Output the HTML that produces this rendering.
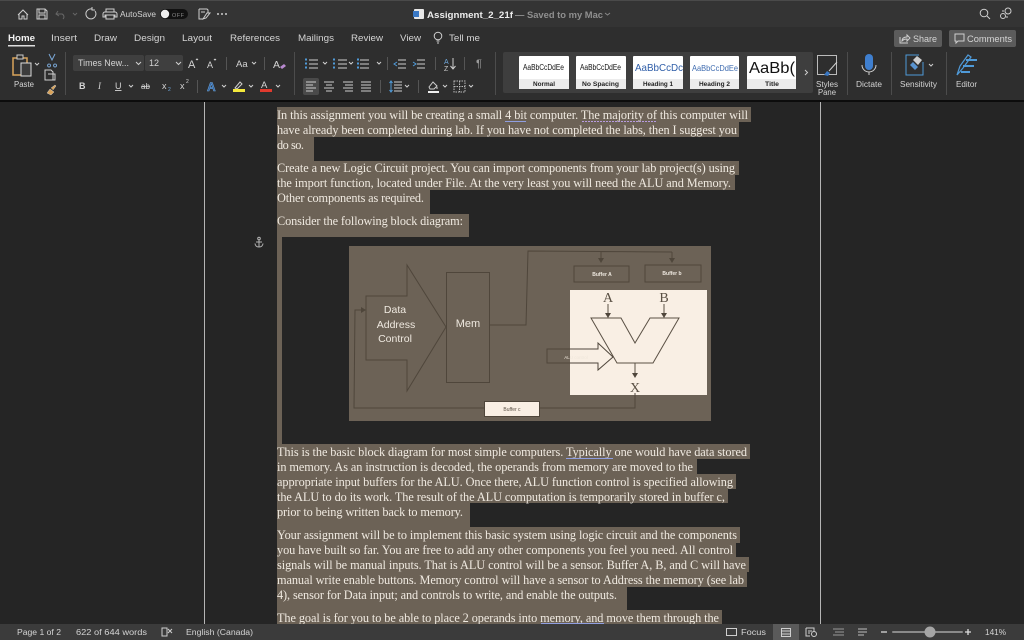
<!DOCTYPE html>
<html><head><meta charset="utf-8"><style>
html,body{margin:0;padding:0;background:#252525;width:1024px;height:640px;overflow:hidden}
svg{display:block;position:absolute;left:0;top:0;filter:blur(.3px)}
.s{font-family:"Liberation Sans",sans-serif}
.u{font-family:"Liberation Sans",sans-serif;font-size:9px;fill:#d4d4d4}
.d{font-family:"Liberation Serif",serif;font-size:12.3px;fill:#efe9e0}
.i{fill:none;stroke:#cfcfcf;stroke-width:1}
.b{fill:none;stroke:#4f9ad8;stroke-width:1}
.k{font-family:"Liberation Sans",sans-serif;fill:#111}
.l{font-family:"Liberation Sans",sans-serif;font-size:6px;fill:#222;font-weight:bold}
</style></head><body>
<svg width="1024" height="640" viewBox="0 0 1024 640" xmlns="http://www.w3.org/2000/svg">
<!-- chrome -->
<rect width="1024" height="27" fill="#343434"/>
<rect width="1024" height="1" fill="#4a4a4a"/>
<rect y="27" width="1024" height="74" fill="#2e2e2e"/>
<rect y="100" width="1024" height="2" fill="#0c0c0c"/>
<rect y="102" width="1024" height="522" fill="#252525"/>
<!-- title bar icons -->
<path class="i" d="M18 15l5-5 5 5M19 14v5h3v-3h2v3h3v-5"/>
<path class="i" d="M37 9h8l2 2v8h-10zM39 9v4h6V9M39 19v-4h6v4"/>
<path d="M58 11l-2 3 3 2M56 14h6a3 3 0 0 1 1 5" fill="none" stroke="#666" stroke-width="1"/>
<path d="M73 13l2 2 2-2" fill="none" stroke="#666" stroke-width="1"/>
<path class="i" d="M95 11a5 5 0 1 1-3-2M92 7v3h3"/>
<path class="i" d="M105 12h10a2 2 0 0 1 2 2v3h-2v-2h-10v2h-2v-3a2 2 0 0 1 2-2zM106 12V9h8v3M106 15h8v4h-8z"/>
<text class="u" x="120" y="17" textLength="36" lengthAdjust="spacingAndGlyphs" style="font-size:8.5px">AutoSave</text>
<rect x="160" y="9" width="28" height="10" rx="5" fill="#111"/>
<circle cx="165" cy="14" r="4.2" fill="#eee"/>
<text x="172" y="17" class="s" font-size="5.5" fill="#888" textLength="12">OFF</text>
<path class="i" d="M199 9h8l1 1v3M199 9v10h4M201 12h4M207 13l-4 6 3-1 4-5z"/>
<circle cx="218" cy="14" r="1" fill="#ccc"/><circle cx="222" cy="14" r="1" fill="#ccc"/><circle cx="226" cy="14" r="1" fill="#ccc"/>
<rect x="414" y="9" width="10" height="10" rx="1" fill="#e8e8e8"/><rect x="413" y="11" width="6" height="6" fill="#3a78c4"/>
<text x="427" y="18" class="s" font-size="9.5" font-weight="bold" fill="#ececec" textLength="86" lengthAdjust="spacingAndGlyphs">Assignment_2_21f</text>
<text x="515" y="18" class="s" font-size="9.5" font-weight="bold" fill="#8f8f8f" textLength="88" lengthAdjust="spacingAndGlyphs">— Saved to my Mac</text>
<path d="M605 13l2.500 2 2.500-2" fill="none" stroke="#888"/>
<circle cx="984" cy="13" r="3.800" class="i"/><path class="i" d="M987 16l3 3"/>
<circle cx="1008" cy="11" r="3" class="i"/><circle cx="1003" cy="16" r="2.500" class="i"/><path class="i" d="M1002 11h2M1007 16v2"/>
<!-- tabs -->
<text x="8" y="41" class="s" font-size="9.500" font-weight="bold" fill="#f2f2f2" textLength="27" lengthAdjust="spacingAndGlyphs">Home</text>
<rect x="8" y="45" width="27" height="1.500" fill="#ddd"/>
<g class="u" style="font-size:9.500px">
<text x="51" y="41" textLength="26" lengthAdjust="spacingAndGlyphs">Insert</text>
<text x="94" y="41" textLength="23" lengthAdjust="spacingAndGlyphs">Draw</text>
<text x="134" y="41" textLength="31" lengthAdjust="spacingAndGlyphs">Design</text>
<text x="182" y="41" textLength="30" lengthAdjust="spacingAndGlyphs">Layout</text>
<text x="230" y="41" textLength="50" lengthAdjust="spacingAndGlyphs">References</text>
<text x="298" y="41" textLength="36" lengthAdjust="spacingAndGlyphs">Mailings</text>
<text x="351" y="41" textLength="32" lengthAdjust="spacingAndGlyphs">Review</text>
<text x="400" y="41" textLength="21" lengthAdjust="spacingAndGlyphs">View</text>
<text x="449" y="41" textLength="31" lengthAdjust="spacingAndGlyphs">Tell me</text>
</g>
<circle cx="438" cy="36" r="3.800" class="i"/><path class="i" d="M436.500 41h3M437 43h2"/>
<!-- share -->
<rect x="894" y="30" width="48" height="17" rx="2" fill="#5b5b5b"/>
<path class="i" d="M900 37v6h8M902 41c0-3 2-4 5-4v-2l3 3-3 3v-2c-2 0-3 0-5 2z"/>
<text x="913" y="42" class="u" style="font-size:9.500px" textLength="24" lengthAdjust="spacingAndGlyphs">Share</text>
<rect x="949" y="30" width="67" height="17" rx="2" fill="#5b5b5b"/>
<path class="i" d="M955 34h9v7h-6l-2 2v-2h-1z"/>
<text x="967" y="42" class="u" style="font-size:9.500px" textLength="45" lengthAdjust="spacingAndGlyphs">Comments</text>
<!-- clipboard -->
<rect x="13" y="58" width="14" height="17" fill="none" stroke="#d9a35a" stroke-width="1.500"/>
<rect x="17" y="55" width="6" height="4" fill="#2e2e2e" stroke="#ccc"/>
<rect x="21" y="63" width="10" height="13" fill="#3c3c3c" stroke="#ddd"/>
<path class="i" d="M35 63l2 2 2-2"/>
<text x="14" y="87" class="u" style="font-size:8px" textLength="20" lengthAdjust="spacingAndGlyphs">Paste</text>
<path d="M49 54l3 6 3-6M49 64a1.500 1.500 0 1 0 .1 0M55 64a1.500 1.500 0 1 0 .1 0" fill="none" stroke="#7aa7d6"/>
<path class="i" d="M45 70h6l2 2v8h-8zM48 74h7v6h-7"/>
<path d="M47 93l3-4 4 3-3 3zM51 88l4-3 1 1-3 4" fill="#d9a35a" stroke="#ccc" stroke-width=".5"/>
<rect x="65" y="52" width="1" height="43" fill="#4c4c4c"/>
<!-- font -->
<rect x="73" y="55" width="71" height="16" rx="2" fill="#3f3f3f"/>
<rect x="145" y="55" width="38" height="16" rx="2" fill="#3f3f3f"/>
<text x="78" y="66" class="u" style="font-size:9px" textLength="51" lengthAdjust="spacingAndGlyphs">Times New...</text>
<path class="i" d="M136 62l2.500 2.500 2.500-2.500M176 62l2.500 2.500 2.500-2.500"/>
<text x="149" y="66" class="u">12</text>
<text x="188" y="68" class="u" style="font-size:11px">A</text><path class="i" d="M196 60l1-1 1 1" />
<text x="207" y="68" class="u" style="font-size:9px">A</text><path class="i" d="M214 59l1 1 1-1"/>
<rect x="226" y="57" width="1" height="13" fill="#555"/>
<text x="236" y="67" class="u" style="font-size:9.500px">Aa</text><path class="i" d="M252 62l2 2 2-2"/>
<rect x="264" y="57" width="1" height="13" fill="#555"/>
<text x="273" y="68" class="u" style="font-size:10.500px">A</text>
<path d="M280 67l4-3 2 2-4 3z" fill="#b98ad0"/>
<!-- formatting row -->
<g class="u" style="font-size:9px">
<text x="79" y="89" font-weight="bold">B</text>
<text x="98" y="89" font-style="italic" style="font-family:'Liberation Serif',serif">I</text>
<text x="115" y="89" text-decoration="underline">U</text>
<text x="141" y="89" text-decoration="line-through" style="font-size:8px">ab</text>
<text x="162" y="89">x</text><text x="168" y="91" style="font-size:5px;fill:#6fa8dc">2</text>
<text x="180" y="89">x</text><text x="186" y="83" style="font-size:5px">2</text>
</g>
<path class="i" d="M129 85l2 2 2-2"/>
<rect x="197" y="80" width="1" height="13" fill="#555"/>
<text x="207" y="91" class="s" font-size="12" font-weight="bold" fill="#2f5f9e" stroke="#6fa8dc" stroke-width=".5">A</text>
<path class="i" d="M222 85l2 2 2-2M249 85l2 2 2-2M276 85l2 2 2-2"/>
<path class="i" d="M235 88l5-6 2 2-5 5z"/><rect x="233" y="89" width="12" height="3" fill="#f4e93c"/>
<text x="261" y="88" class="u" style="font-size:9.500px">A</text><rect x="260" y="89" width="12" height="3" fill="#e03a2e"/>
<rect x="294" y="52" width="1" height="43" fill="#4c4c4c"/>
<!-- paragraph -->
<path class="i" d="M309 60h9M309 64h9M309 68h9M338 60h9M338 64h9M338 68h9M360 60h9M360 64h9M360 68h9"/>
<path d="M305 59.500h2M305 63.500h2M305 67.500h2M333 59.500h2M333 63.500h2M333 67.500h2M357 59.500h2M357 63.500h2M357 67.500h2" stroke="#4f9ad8" stroke-width="2"/>
<path class="i" d="M323 62l2 2 2-2M349 62l2 2 2-2M377 62l2 2 2-2"/>
<rect x="387" y="57" width="1" height="13" fill="#555"/>
<path class="i" d="M398 60h8M398 64h8M398 68h8M417 60h8M417 64h8M417 68h8"/>
<path class="b" d="M397 62l-3 2 3 2M413 62l3 2-3 2"/>
<rect x="435" y="57" width="1" height="13" fill="#555"/>
<text x="444" y="64" class="s" font-size="7" fill="#6fa8dc">A</text><text x="444" y="71" class="s" font-size="7" fill="#ccc">Z</text>
<path class="i" d="M453 58v11M450.500 66l2.500 3 2.500-3"/>
<rect x="464" y="57" width="1" height="13" fill="#555"/>
<text x="476" y="67" class="u" style="font-size:11px;fill:#999">¶</text>
<rect x="303" y="78" width="16" height="17" rx="2" fill="#4a4a4a"/>
<path class="i" d="M306 82h10M306 85h7M306 88h10M306 91h7M324 82h10M326 85h6M324 88h10M326 91h6M343 82h10M345 85h8M343 88h10M345 91h8M361 82h10M361 85h10M361 88h10M361 91h10"/>
<rect x="380" y="80" width="1" height="13" fill="#555"/>
<path class="i" d="M394 82h8M394 85h8M394 88h8M394 91h8"/><path class="b" d="M391 81v11M389.500 83l1.500-2 1.500 2M389.500 90l1.500 2 1.500-2"/>
<path class="i" d="M405 85l2 2 2-2"/>
<rect x="418" y="80" width="1" height="13" fill="#555"/>
<path class="i" d="M429 87l4-5 4 4-3 3h-4zM437 87v2"/><rect x="428" y="91" width="11" height="2" fill="#eee"/>
<path class="i" d="M443 85l2 2 2-2M469 85l2 2 2-2"/>
<rect x="454" y="81" width="11" height="11" fill="none" stroke="#bbb" stroke-dasharray="1.500 1"/><path d="M459.500 81v11M454 86.500h11" stroke="#bbb" stroke-dasharray="1.500 1"/>
<rect x="495" y="52" width="1" height="43" fill="#4c4c4c"/>
<!-- styles gallery -->
<rect x="503" y="52" width="310" height="41" rx="2" fill="#3e3e3e"/>
<g>
<rect x="519" y="56" width="50" height="33" rx="1" fill="#fff"/><rect x="519" y="79" width="50" height="10" fill="#ececec"/>
<rect x="576" y="56" width="50" height="33" rx="1" fill="#fff"/><rect x="576" y="79" width="50" height="10" fill="#ececec"/>
<rect x="633" y="56" width="50" height="33" rx="1" fill="#fff"/><rect x="633" y="79" width="50" height="10" fill="#ececec"/>
<rect x="690" y="56" width="49" height="33" rx="1" fill="#fff"/><rect x="690" y="79" width="49" height="10" fill="#ececec"/>
<rect x="747" y="56" width="49" height="33" rx="1" fill="#fff"/><rect x="747" y="79" width="49" height="10" fill="#ececec"/>
</g>
<text x="523" y="70" class="k" font-size="8" textLength="41" lengthAdjust="spacingAndGlyphs">AaBbCcDdEe</text>
<text x="580" y="70" class="k" font-size="8" textLength="41" lengthAdjust="spacingAndGlyphs">AaBbCcDdEe</text>
<text x="635" y="71" class="s" font-size="10.500" fill="#2f5ea8" textLength="48" lengthAdjust="spacingAndGlyphs">AaBbCcDc</text>
<text x="692" y="71" class="s" font-size="8" fill="#3f6cb0" textLength="46" lengthAdjust="spacingAndGlyphs">AaBbCcDdEe</text>
<text x="749" y="73" class="k" font-size="16" textLength="46" lengthAdjust="spacingAndGlyphs">AaBb(</text>
<text x="533" y="86" class="l" textLength="22" lengthAdjust="spacingAndGlyphs">Normal</text>
<text x="582" y="86" class="l" textLength="37" lengthAdjust="spacingAndGlyphs">No Spacing</text>
<text x="643" y="86" class="l" textLength="30" lengthAdjust="spacingAndGlyphs">Heading 1</text>
<text x="699" y="86" class="l" textLength="31" lengthAdjust="spacingAndGlyphs">Heading 2</text>
<text x="765" y="86" class="l" textLength="14" lengthAdjust="spacingAndGlyphs">Title</text>
<path class="i" d="M805 70l2.500 2.500-2.500 2.500"/>
<rect x="817.500" y="55.500" width="19" height="19" fill="none" stroke="#bbb"/>
<path d="M824 75l3-4 3 2-2 3z" fill="#3a78c4"/><path class="i" d="M829 71l8-9"/>
<text x="816" y="87" class="u" style="font-size:8px" textLength="22" lengthAdjust="spacingAndGlyphs">Styles</text>
<text x="818" y="95" class="u" style="font-size:8px" textLength="18" lengthAdjust="spacingAndGlyphs">Pane</text>
<rect x="847" y="52" width="1" height="43" fill="#4c4c4c"/>
<rect x="865" y="54" width="8" height="16" rx="4" fill="#3f7fcf"/>
<path class="i" d="M862 65a7 7 0 0 0 14 0M869 72v3"/>
<text x="856" y="87" class="u" style="font-size:8px" textLength="26" lengthAdjust="spacingAndGlyphs">Dictate</text>
<rect x="891" y="52" width="1" height="43" fill="#4c4c4c"/>
<path d="M919 55h-13v20h17V62" fill="none" stroke="#4f9ad8"/>
<path d="M913 60l4-4 5 4-4 5z" fill="#cfcfcf"/><path d="M910 65l3-3 5 5-3 3z" fill="#5a94d0"/>
<path class="i" d="M929 64l2 2 2-2"/>
<text x="900" y="87" class="u" style="font-size:8px" textLength="37" lengthAdjust="spacingAndGlyphs">Sensitivity</text>
<rect x="946" y="52" width="1" height="43" fill="#4c4c4c"/>
<path d="M957 75l3-9 8-11 3 2-8 11z" fill="none" stroke="#4f9ad8" stroke-width="1.200"/>
<path d="M966 60h11M963 66h11M961 72h9" stroke="#4f9ad8" stroke-width="2"/>
<text x="956" y="87" class="u" style="font-size:8px" textLength="21" lengthAdjust="spacingAndGlyphs">Editor</text>
<!-- page rules -->
<rect x="204" y="102" width="1" height="522" fill="#b5b5b5"/>
<rect x="820" y="102" width="1" height="522" fill="#b5b5b5"/>
<!-- highlight -->
<g fill="#6c6256">
<rect x="277" y="107" width="474" height="15"/>
<rect x="277" y="122" width="462" height="15"/>
<rect x="277" y="137" width="37" height="24"/>
<rect x="277" y="161" width="462" height="14"/>
<rect x="277" y="175" width="458" height="15"/>
<rect x="277" y="190" width="153" height="24"/>
<rect x="277" y="214" width="192" height="23"/>
<rect x="277" y="237" width="5" height="207"/>
<rect x="277" y="444" width="473" height="15"/>
<rect x="277" y="459" width="420" height="15"/>
<rect x="277" y="474" width="459" height="15"/>
<rect x="277" y="489" width="451" height="14"/>
<rect x="277" y="503" width="193" height="24"/>
<rect x="277" y="527" width="463" height="16"/>
<rect x="277" y="543" width="459" height="14"/>
<rect x="277" y="557" width="472" height="15"/>
<rect x="277" y="572" width="470" height="15"/>
<rect x="277" y="587" width="350" height="23"/>
<rect x="277" y="610" width="445" height="14"/>
</g>
<!-- document text -->
<g class="d" lengthAdjust="spacingAndGlyphs">
<text x="277" y="119" textLength="471">In this assignment you will be creating a small 4 bit computer. The majority of this computer will</text>
<text x="277" y="134" textLength="460">have already been completed during lab. If you have not completed the labs, then I suggest you</text>
<text x="277" y="149" textLength="27">do so.</text>
<text x="277" y="172" textLength="458">Create a new Logic Circuit project. You can import components from your lab project(s) using</text>
<text x="277" y="187" textLength="454">the import function, located under File. At the very least you will need the ALU and Memory.</text>
<text x="277" y="202" textLength="147">Other components as required.</text>
<text x="277" y="225" textLength="186">Consider the following block diagram:</text>
<text x="277" y="456" textLength="470">This is the basic block diagram for most simple computers. Typically one would have data stored</text>
<text x="277" y="471" textLength="416">in memory. As an instruction is decoded, the operands from memory are moved to the</text>
<text x="277" y="486" textLength="456">appropriate input buffers for the ALU. Once there, ALU function control is specified allowing</text>
<text x="277" y="501" textLength="448">the ALU to do its work. The result of the ALU computation is temporarily stored in buffer c,</text>
<text x="277" y="516" textLength="186">prior to being written back to memory.</text>
<text x="277" y="539" textLength="460">Your assignment will be to implement this basic system using logic circuit and the components</text>
<text x="277" y="554" textLength="456">you have built so far. You are free to add any other components you feel you need. All control</text>
<text x="277" y="569" textLength="469">signals will be manual inputs. That is ALU control will be a sensor. Buffer A, B, and C will have</text>
<text x="277" y="584" textLength="467">manual write enable buttons. Memory control will have a sensor to Address the memory (see lab</text>
<text x="277" y="599" textLength="340">4), sensor for Data input; and controls to write, and enable the outputs.</text>
<text x="277" y="622" textLength="442">The goal is for you to be able to place 2 operands into memory, and move them through the</text>
</g>
<path d="M505 121.500h21M566 458.500h47M541 623.500h63" stroke="#8f9ee0" stroke-width="1"/>
<path d="M582 121.500h75" stroke="#b79be0" stroke-width="1" stroke-dasharray="2 1"/>
<!-- anchor -->
<g fill="none" stroke="#b5b5b5" stroke-width="1"><circle cx="259" cy="238.500" r="1.300"/><path d="M259 240v7M256 242h6M255 243.500c.3 2.500 2 3.500 4 3.500s3.700-1 4-3.500"/></g>
<!-- diagram -->
<rect x="349" y="246" width="362" height="175" fill="#6c6256"/>
<rect x="570" y="290" width="137" height="105" fill="#f9efe4"/>
<g fill="none" stroke="#4f463b" stroke-width="1">
<path d="M366 296h41v-31l39 62-39 64v-31h-41z"/>
<rect x="446.500" y="272.500" width="43" height="110"/>
<path d="M489 325h37l2-74 144 1M601 252v10M672 252v10"/>
<rect x="574" y="266" width="55" height="16"/>
<rect x="645" y="265" width="56" height="17"/>
<path d="M635 393v15H354l1-98h8"/>
<path d="M591 318h30l14 25 15-25h29l-26 45h-36z" stroke="#5a5044"/>
<path d="M608 304v12M664 304v12M635 363v12" stroke="#5a5044"/>
<path d="M570 349h28v-6l15 14-15 13v-7h-28" fill="#f9efe4"/>
<path d="M570 349h-23v14h23"/>
</g>
<rect x="570" y="350" width="28" height="12" fill="#f9efe4"/>
<path fill="#4f463b" d="M598 258h6l-3 5zM669 258h6l-3 5zM361 307v6l5-3zM605 313h6l-3 5zM661 313h6l-3 5zM632 373h6l-3 5z"/>
<rect x="484.500" y="401.500" width="55" height="15" fill="#f9efe4" stroke="#4f463b"/>
<g class="s" fill="#efe9e0" text-anchor="middle">
<text x="395" y="313" font-size="10.500">Data</text>
<text x="396" y="328" font-size="10.500">Address</text>
<text x="395" y="342" font-size="10.500">Control</text>
<text x="468" y="327" font-size="11">Mem</text>
<text x="602" y="276" font-size="5" font-weight="bold">Buffer A</text>
<text x="672" y="275" font-size="5" font-weight="bold">Buffer b</text>
</g>
<text x="512" y="411" class="s" font-size="5" fill="#5a5044" text-anchor="middle">Buffer c</text>
<text x="576" y="359" class="s" font-size="4.500" fill="#efe6da" text-anchor="middle">ALU control</text>
<g font-family="'Liberation Serif',serif" font-size="14" fill="#5a5044" text-anchor="middle">
<text x="608" y="302">A</text><text x="664" y="302">B</text><text x="635" y="392">X</text>
</g>
<!-- status bar -->
<rect y="624" width="1024" height="16" fill="#3b3b3b"/>
<g class="u" style="font-size:8px">
<text x="17" y="635" textLength="44" lengthAdjust="spacingAndGlyphs">Page 1 of 2</text>
<text x="76" y="635" textLength="71" lengthAdjust="spacingAndGlyphs">622 of 644 words</text>
<text x="186" y="635" textLength="67" lengthAdjust="spacingAndGlyphs">English (Canada)</text>
<text x="741" y="635" textLength="25" lengthAdjust="spacingAndGlyphs">Focus</text>
<text x="985" y="635" textLength="21" lengthAdjust="spacingAndGlyphs">141%</text>
</g>
<path class="i" d="M167 628h-5v8h5v-8zM168 629l4 4M172 629l-4 4"/>
<rect x="726.500" y="628.500" width="10" height="7" class="i"/>
<rect x="773" y="624" width="26" height="16" fill="#5a5a5a"/>
<rect x="781.500" y="628.500" width="9" height="8" class="i"/><path class="i" d="M782 631h8M782 634h8"/>
<path class="i" d="M806 628h8v3M806 628v8h4M808 631h4M808 633h2"/><circle cx="814" cy="634" r="2.500" class="i"/>
<path d="M833 629h11M835 632h9M833 635h11" stroke="#9a9a9a" fill="none"/>
<path d="M858 629h9M858 632h9M858 635h6" stroke="#bdbdbd" fill="none"/>
<path d="M881 632h6M965 632h6M968 629v6" stroke="#ddd" stroke-width="1.300"/>
<rect x="892" y="631" width="71" height="2" rx="1" fill="#8a8a8a"/>
<circle cx="930" cy="632" r="5.500" fill="#a5a5a5"/>
</svg>
</body></html>
